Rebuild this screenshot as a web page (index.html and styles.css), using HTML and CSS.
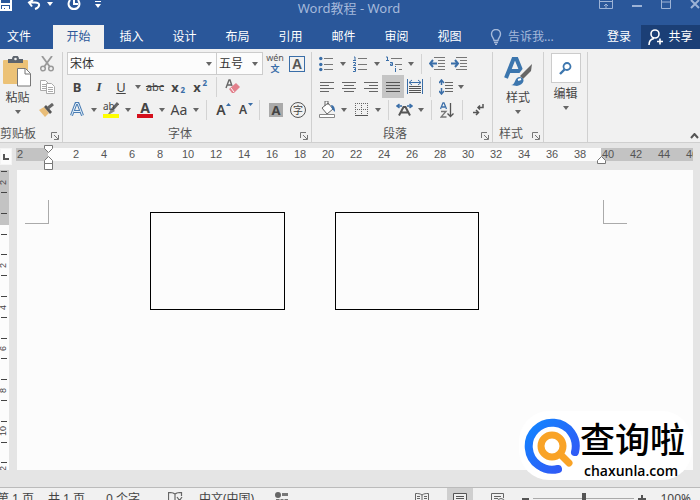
FILE: index.html
```html
<!DOCTYPE html>
<html lang="zh-CN">
<head>
<meta charset="utf-8">
<title>Word教程 - Word</title>
<link rel="stylesheet" href="styles.css">
</head>
<body>
<svg class="defs" aria-hidden="true">
  <symbol id="caret" viewBox="0 0 6 4"><path d="M0 0h6L3 4z" fill="currentColor"/></symbol>
  <symbol id="launch" viewBox="0 0 8 8"><path d="M.5 6V.5H6M3 3l4 4M7.500 3v4.500H3" fill="none" stroke="#777"/></symbol>
</svg>

<header class="top">
  <div class="titlebar">
    <div class="quick">
      <button aria-label="保存"><svg width="13" height="12" viewBox="0 0 13 12"><path d="M0 0v10h11V0M0 4h11M3 10V7h5v3M6 8v2" fill="none" stroke="#fff" stroke-width="2"/></svg></button>
      <button class="undo" aria-label="撤消"><svg width="14" height="10" viewBox="0 0 14 10"><path d="M2 2.500h6c6 0 5 5 0 6.500M6 0L2 2.500l3 4" fill="none" stroke="#fff" stroke-width="2"/></svg></button>
      <button class="undo-more" aria-label="撤消列表"><svg width="6" height="4"><use href="#caret"/></svg></button>
      <button class="redo" aria-label="重复"><svg width="14" height="12" viewBox="0 0 14 12"><path d="M3 0C0 4 2 9 7 9s7-5 4-9M7 0v4h4" fill="none" stroke="#fff" stroke-width="2"/></svg></button>
      <button class="custom" aria-label="自定义快速访问工具栏"><svg width="6" height="8" viewBox="0 0 6 8"><path d="M0 .5h6" stroke="#fff"/><path d="M0 3h6L3 7z" fill="#fff"/></svg></button>
    </div>
    <h1>Word教程 - Word</h1>
    <div class="window">
      <button aria-label="功能区显示选项"><svg width="14" height="10" viewBox="0 0 14 10"><path d="M.5 0v8.500h13V0M0 1.500h14M7 8V4M5 6l2-2 2 2" fill="none" stroke="currentColor"/></svg></button>
      <button aria-label="最小化"><svg width="10" height="10" viewBox="0 0 10 10"><path d="M0 6h10" stroke="currentColor" stroke-width="2"/></svg></button>
      <button aria-label="还原"><svg width="10" height="10" viewBox="0 0 10 10"><path d="M.5 0v8.500h9V0M0 2h10" fill="none" stroke="currentColor"/></svg></button>
      <button aria-label="关闭"><svg width="10" height="10" viewBox="0 0 10 10"><path d="M1 0l8 8M9 0L1 8" stroke="currentColor" stroke-width="2"/></svg></button>
    </div>
  </div>
  <nav class="tabs">
    <button class="file">文件</button>
    <button class="active">开始</button>
    <button>插入</button>
    <button>设计</button>
    <button>布局</button>
    <button>引用</button>
    <button>邮件</button>
    <button>审阅</button>
    <button>视图</button>
    <button class="tell"><svg width="12" height="16" viewBox="0 0 12 16"><path d="M4 11.500C4 9 1.500 8 1.500 5a4.500 4.500 0 019 0c0 3-2.500 4-2.500 6.500zM4 13.500h4M5 15.500h2" fill="none" stroke="currentColor" stroke-width="1.400"/></svg>告诉我...</button>
    <button class="login">登录</button>
    <button class="share"><svg width="16" height="17" viewBox="0 0 16 17"><circle cx="7" cy="5" r="4" fill="none" stroke="#fff" stroke-width="1.600"/><path d="M1 16c0-4 2-6 5-6.500M9 12.500h6M12 9.500v6" fill="none" stroke="#fff" stroke-width="1.600"/></svg>共享</button>
  </nav>
</header>

<section class="ribbon">
  <div class="group clipboard">
    <div class="body">
      <button class="big paste"><svg width="29" height="31" viewBox="0 0 29 31"><rect x="0" y="4" width="25" height="24" rx="1" fill="#ecc277"/><path d="M5 7V3h4a3.500 3.500 0 017 0h4v4z" fill="#5d646d"/><circle cx="12.500" cy="3" r="1.300" fill="#f1f1f1"/><path d="M14.500 12.500h8l5 5v12.500h-13z" fill="#fff" stroke="#777"/><path d="M22 13v5h5" fill="none" stroke="#777"/></svg><span>粘贴</span><svg class="caret" width="6" height="4"><use href="#caret"/></svg></button>
      <div class="stack">
        <button class="tool" aria-label="剪切"><svg width="14" height="16" viewBox="0 0 14 16"><path d="M2 0l8 11M12 0L4 11" stroke="#999" stroke-width="1.800"/><circle cx="3" cy="12.500" r="2.300" fill="none" stroke="#999" stroke-width="1.500"/><circle cx="11" cy="12.500" r="2.300" fill="none" stroke="#999" stroke-width="1.500"/></svg></button>
        <button class="tool" aria-label="复制"><svg width="15" height="14" viewBox="0 0 15 14"><path d="M.5.500h5l3 3v7h-8zM2 4.500h4M2 6.500h4M2 8.500h4" fill="#fff" stroke="#aaa"/><path d="M6.500 3.500h5l3 3v7h-8zM8 7.500h5M8 9.500h5M8 11.500h5" fill="#fff" stroke="#aaa"/></svg></button>
        <button class="tool" aria-label="格式刷"><svg width="16" height="14" viewBox="0 0 16 14"><path d="M0 7l5-3 5 6-4 4z" fill="#e9bd78"/><path d="M5 4l2-2 6 7-2 2z" fill="#555"/><path d="M9 5l5-4" stroke="#666" stroke-width="3"/></svg></button>
      </div>
    </div>
    <footer><span>剪贴板</span><button aria-label="剪贴板设置"><svg width="8" height="8"><use href="#launch"/></svg></button></footer>
  </div>

  <div class="group font">
    <div class="row">
      <label class="combo name"><select aria-label="字体"><option>宋体</option></select><svg class="caret" width="6" height="4"><use href="#caret"/></svg></label>
      <label class="combo size"><select aria-label="字号"><option>五号</option></select><svg class="caret" width="6" height="4"><use href="#caret"/></svg></label>
      <button class="tool pinyin" aria-label="拼音指南"><span>wén</span><b>文</b></button>
      <button class="tool boxed" aria-label="字符边框"><span>A</span></button>
    </div>
    <div class="row">
      <button class="tool"><b>B</b></button>
      <button class="tool"><i>I</i></button>
      <button class="tool"><u>U</u></button>
      <button class="drop" aria-label="下划线样式"><svg class="caret" width="6" height="4"><use href="#caret"/></svg></button>
      <button class="tool"><s>abc</s></button>
      <button class="tool script" aria-label="下标">x<sub>2</sub></button>
      <button class="tool script" aria-label="上标">x<sup>2</sup></button>
      <span class="sep wide"></span>
      <button class="tool" aria-label="清除格式"><svg width="15" height="15" viewBox="0 0 15 15"><path d="M1 9l3-8h1l2 6M2 6h4" fill="none" stroke="#666" stroke-width="1.400"/><path d="M4 10l7-6 4 4-6 6H7z" fill="#e2808c"/><path d="M6 9l3 4" stroke="#fff"/></svg></button>
    </div>
    <div class="row">
      <button class="tool" aria-label="文本效果"><svg width="14" height="15" viewBox="0 0 14 15"><path d="M1.500 13.500L6 1.500h2l4.500 12M3.500 9.500h7" fill="none" stroke="#4b7db3" stroke-width="3"/><path d="M1.500 13.500L6 1.500h2l4.500 12M3.500 9.500h7" fill="none" stroke="#e6f2fb" stroke-width="1"/></svg></button>
      <button class="drop" aria-label="文本效果列表"><svg class="caret" width="6" height="4"><use href="#caret"/></svg></button>
      <button class="tool mark" aria-label="突出显示"><span>ab</span><svg width="16" height="16" viewBox="0 0 16 16"><path d="M15 1L8 9" stroke="#666" stroke-width="3"/><path d="M9 6l3 3-5 3H5z" fill="#888"/><path d="M0 12h16v4H0z" fill="#ff0"/></svg></button>
      <button class="drop" aria-label="突出显示颜色"><svg class="caret" width="6" height="4"><use href="#caret"/></svg></button>
      <button class="tool color" aria-label="字体颜色"><span>A</span></button>
      <button class="drop" aria-label="字体颜色列表"><svg class="caret" width="6" height="4"><use href="#caret"/></svg></button>
      <button class="tool case">Aa</button>
      <button class="drop" aria-label="更改大小写"><svg class="caret" width="6" height="4"><use href="#caret"/></svg></button>
      <span class="sep"></span>
      <button class="tool grow" aria-label="增大字号">A<svg width="5" height="3" viewBox="0 0 5 3"><path d="M0 3h5L2.500 0z" fill="#3a6ea8"/></svg></button>
      <button class="tool grow small" aria-label="缩小字号">A<svg width="5" height="3" viewBox="0 0 5 3"><path d="M0 0h5L2.500 3z" fill="#3a6ea8"/></svg></button>
      <span class="sep"></span>
      <button class="tool shade" aria-label="字符底纹"><span>A</span></button>
      <button class="tool ring" aria-label="带圈字符"><span>字</span></button>
    </div>
    <footer><span>字体</span><button aria-label="字体设置"><svg width="8" height="8"><use href="#launch"/></svg></button></footer>
  </div>

  <div class="group para">
    <div class="row">
      <button class="tool" aria-label="项目符号"><svg width="14" height="16" viewBox="0 0 14 16"><path d="M5 2.500h9M5 8.500h9M5 13.500h9" stroke="#777"/><circle cx="1.800" cy="2.500" r="1.700" fill="#3a6ea8"/><circle cx="1.800" cy="8.500" r="1.700" fill="#3a6ea8"/><circle cx="1.800" cy="13.500" r="1.700" fill="#3a6ea8"/></svg></button>
      <button class="drop" aria-label="项目符号库"><svg class="caret" width="6" height="4"><use href="#caret"/></svg></button>
      <button class="tool" aria-label="编号"><svg width="14" height="16" viewBox="0 0 14 16"><path d="M5 2.500h9M5 8.500h9M5 13.500h9" stroke="#777"/><path d="M1 1h1v3M0 4.500h3M0 6.500h2.500v1.500L.5 9.500H3M0 11.500h2.500v4H0M1 13.500h1" fill="none" stroke="#3a6ea8"/></svg></button>
      <button class="drop" aria-label="编号库"><svg class="caret" width="6" height="4"><use href="#caret"/></svg></button>
      <button class="tool" aria-label="多级列表"><svg width="16" height="16" viewBox="0 0 16 16"><path d="M5 2.500h11M9 8.500h7M13 13.500h3" stroke="#777"/><path d="M0 1h1.500v3M0 4.500h3M4 6.500h2.500v3H4.500v-1.500h2M9.500 12v4M9.500 10v1" fill="none" stroke="#3a6ea8"/></svg></button>
      <button class="drop" aria-label="多级列表库"><svg class="caret" width="6" height="4"><use href="#caret"/></svg></button>
      <span class="sep"></span>
      <button class="tool" aria-label="减少缩进量"><svg width="16" height="13" viewBox="0 0 16 13"><path d="M5 .5h11M9 3.500h7M9 6.500h7M9 9.500h7M5 12.500h11" stroke="#777"/><path d="M8 6.500H1M4 3L1 6.500 4 10" fill="none" stroke="#3a6ea8" stroke-width="2"/></svg></button>
      <button class="tool" aria-label="增加缩进量"><svg width="16" height="13" viewBox="0 0 16 13"><path d="M5 .5h11M9 3.500h7M9 6.500h7M9 9.500h7M5 12.500h11" stroke="#777"/><path d="M0 6.500h7M4 3l3 3.500L4 10" fill="none" stroke="#3a6ea8" stroke-width="2"/></svg></button>
    </div>
    <div class="row inset">
      <button class="tool" aria-label="左对齐"><svg width="14" height="11" viewBox="0 0 14 11"><path d="M0 1.500h14M0 4.500h9M0 7.500h14M0 10.500h9" stroke="#666"/></svg></button>
      <button class="tool" aria-label="居中"><svg width="14" height="11" viewBox="0 0 14 11"><path d="M0 1.500h14M2 4.500h10M0 7.500h14M2 10.500h10" stroke="#666"/></svg></button>
      <button class="tool" aria-label="右对齐"><svg width="14" height="11" viewBox="0 0 14 11"><path d="M0 1.500h14M5 4.500h9M0 7.500h14M5 10.500h9" stroke="#666"/></svg></button>
      <button class="tool pressed" aria-label="两端对齐"><svg width="14" height="11" viewBox="0 0 14 11"><path d="M0 1.500h14M0 4.500h14M0 7.500h14M0 10.500h14" stroke="#555"/></svg></button>
      <button class="tool" aria-label="分散对齐"><svg width="16" height="15" viewBox="0 0 16 15"><path d="M.5 0v15M15.500 0v15M2 3.500h12M5 1L2 3.500 5 6M11 1l3 2.500L11 6" fill="none" stroke="#3a6ea8"/><path d="M2 7.500h12M2 9.500h12M2 11.500h12M2 13.500h12" stroke="#555"/></svg></button>
      <span class="sep"></span>
      <button class="tool" aria-label="行距"><svg width="14" height="16" viewBox="0 0 14 16"><path d="M6 3.500h8M6 6.500h8M6 9.500h8M6 12.500h8" stroke="#666"/><path d="M2.500 1v5M0 4l2.500-3L5 4M2.500 9v6M0 12l2.500 3L5 12" fill="none" stroke="#3a6ea8" stroke-width="1.500"/></svg></button>
      <button class="drop tight" aria-label="行距选项"><svg class="caret" width="6" height="4"><use href="#caret"/></svg></button>
    </div>
    <div class="row inset">
      <button class="tool" aria-label="底纹"><svg width="17" height="17" viewBox="0 0 17 17"><path d="M3 7l6-5 5 6-6 5zM6 5V0h3v4" fill="#fff" stroke="#666"/><path d="M12 4c3 0 4 3 4 7l-3-3z" fill="#3a6ea8"/><path d="M.5 13.500h15v3H.5z" fill="#fff" stroke="#888"/></svg></button>
      <button class="drop" aria-label="底纹颜色"><svg class="caret" width="6" height="4"><use href="#caret"/></svg></button>
      <button class="tool" aria-label="边框"><svg width="13" height="13" viewBox="0 0 13 13"><path d="M0 .5h13M0 6.500h13M.5 0v13M6.500 0v13M12.500 0v13" stroke="#666" stroke-dasharray="1 1"/><path d="M0 12.500h13" stroke="#555"/></svg></button>
      <button class="drop" aria-label="边框列表"><svg class="caret" width="6" height="4"><use href="#caret"/></svg></button>
      <span class="sep"></span>
      <button class="tool" aria-label="中文版式"><svg width="17" height="13" viewBox="0 0 17 13"><path d="M3 12.500L7.500 4h2l4.500 8.500M5 9.500h7" fill="none" stroke="#555" stroke-width="2"/><path d="M6 3H1M3.500 1L1 3l2.500 2M11 3h5M13.500 1L16 3l-2.500 2" fill="none" stroke="#3a6ea8" stroke-width="1.500"/></svg></button>
      <button class="drop" aria-label="中文版式选项"><svg class="caret" width="6" height="4"><use href="#caret"/></svg></button>
      <span class="sep"></span>
      <button class="tool" aria-label="排序"><svg width="14" height="16" viewBox="0 0 14 16"><path d="M.5 7L3 .8h1L6.500 7M2 5h3" fill="none" stroke="#3a6ea8" stroke-width="1.300"/><path d="M1 9.500h5l-5 5.500h5.500" fill="none" stroke="#777" stroke-width="1.300"/><path d="M10.500 1v13M7.500 11.500l3 3 3-3" fill="none" stroke="#555" stroke-width="1.300"/></svg></button>
      <span class="sep"></span>
      <button class="tool" aria-label="显示编辑标记"><svg width="11" height="12" viewBox="0 0 11 12"><path d="M10 0v3.500H5M7 1.500l-2 2 2 2M0 8.500h5M3 6l2.500 2.500L3 11" fill="none" stroke="#555" stroke-width="1.500"/></svg></button>
    </div>
    <footer><span>段落</span><button aria-label="段落设置"><svg width="8" height="8"><use href="#launch"/></svg></button></footer>
  </div>

  <div class="group styles">
    <div class="body">
      <button class="big"><svg width="29" height="31" viewBox="0 0 29 31"><path d="M2 22L9.500 3h3L19 19M5 15h11" fill="none" stroke="#3c76ae" stroke-width="4"/><path d="M27 8L16 22" stroke="#f1f1f1" stroke-width="7"/><path d="M28 8l-1 7-8 8-3-3z" fill="#666"/><path d="M7 29c5 0 3-8 9-8 6 1 4 8-3 9z" fill="#3c76ae"/><path d="M14 24l3-1" stroke="#fff" stroke-width="2"/></svg><span>样式</span><svg class="caret" width="6" height="4"><use href="#caret"/></svg></button>
    </div>
    <footer><span>样式</span><button aria-label="样式设置"><svg width="8" height="8"><use href="#launch"/></svg></button></footer>
  </div>

  <div class="group editing">
    <div class="body">
      <button class="big"><span class="find"><svg width="13" height="13" viewBox="0 0 13 13"><circle cx="8" cy="4.500" r="3.500" fill="none" stroke="#3c76ae" stroke-width="1.800"/><path d="M5.500 7.500L1 12" stroke="#3c76ae" stroke-width="2.400"/></svg></span><span>编辑</span><svg class="caret" width="6" height="4"><use href="#caret"/></svg></button>
    </div>
  </div>
  <button class="collapse" aria-label="折叠功能区"><svg width="9" height="6" viewBox="0 0 9 6"><path d="M1 5l3.500-4L8 5" fill="none" stroke="#555" stroke-width="2"/></svg></button>
</section>

<div class="hruler">
  <button class="tabstop" aria-label="制表符"><svg width="6" height="6" viewBox="0 0 6 6"><path d="M1 0v5h5" fill="none" stroke="#555" stroke-width="2"/></svg></button>
  <div class="scale">
    <span>2</span><span></span><span>2</span><span>4</span><span>6</span><span>8</span><span>10</span><span>12</span><span>14</span><span>16</span><span>18</span><span>20</span><span>22</span><span>24</span><span>26</span><span>28</span><span>30</span><span>32</span><span>34</span><span>36</span><span>38</span><span>40</span><span>42</span><span>44</span><span>46</span>
  </div>
  <svg class="indent first" width="9" height="25" viewBox="0 0 9 25"><path d="M.5.500h8v3l-4 4-4-4zM.5 18.500v-3l4-4 4 4v3zM.5 18.500h8v6h-8z" fill="#fff" stroke="#777"/></svg>
  <svg class="indent last" width="9" height="8" viewBox="0 0 9 8"><path d="M.5 7.500v-3l4-4 4 4v3z" fill="#fff" stroke="#777"/></svg>
</div>

<main>
  <svg class="vruler" width="9" height="300" viewBox="0 0 9 300">
    <path d="M0 0h9v300H0z" fill="#fcfcfc"/><path d="M0 0h9v55H0z" fill="#c3c3c3"/>
    <path d="M1 1.500h6M1 22.500h6M1 43.500h6M1 64.500h6M1 84.500h6M1 105.500h6M1 126.500h6M1 147.500h6M1 168.500h6M1 188.500h6M1 209.500h6M1 230.500h6M1 251.500h6M1 272.500h6M1 292.500h6" stroke="#444"/>
    <g>
      <text transform="translate(6 15) rotate(-90)">2</text>
      <text transform="translate(6 98) rotate(-90)">2</text>
      <text transform="translate(6 140) rotate(-90)">4</text>
      <text transform="translate(6 181) rotate(-90)">6</text>
      <text transform="translate(6 223) rotate(-90)">8</text>
      <text transform="translate(6 266) rotate(-90)">10</text>
      <text transform="translate(6 306) rotate(-90)">12</text>
    </g>
  </svg>
  <article class="page">
    <i class="crop left"></i><i class="crop right"></i>
    <div class="shape"></div>
    <div class="shape second"></div>
  </article>
</main>

<footer class="status">
  <span class="pages">第 1 页</span>
  <span class="total">共 1 页</span>
  <span class="words">0 个字</span>
  <svg class="proof" width="15" height="14" viewBox="0 0 15 14"><path d="M7 2v11M7 2C5 .5 3 .5.500.500V11C3 11 5 11.500 7 13M7 2C9 .5 11 .5 13.500.500V4M9 5l5 7M14 5l-5 7" fill="none" stroke="#666" stroke-width="1.200"/></svg>
  <span class="lang">中文(中国)</span>
  <svg class="macro" width="13" height="14" viewBox="0 0 13 14"><circle cx="3" cy="3" r="3" fill="#666"/><path d="M7 1h6v3H7zM1 7h12v6H1z" fill="#777"/><path d="M1 9.500h12M5 7v6M9 7v6" stroke="#f1f1f1"/></svg>
  <span class="space"></span>
  <button class="view" aria-label="阅读视图"><svg width="14" height="12" viewBox="0 0 14 12"><path d="M7 1.500v10M.5.500C3 .5 5 .5 7 2c2-1.500 4-1.500 6.500-1.500v10C11 10.500 9 10.500 7 12 5 10.500 3 10.500.500 10.500zM2 3.500h3M2 5.500h3M2 7.500h3M9 3.500h3M9 5.500h3M9 7.500h3" fill="none" stroke="#666"/></svg></button>
  <button class="view on" aria-label="页面视图"><svg width="14" height="12" viewBox="0 0 14 12"><path d="M.5.500h13v12H.5zM3 3.500h8M3 5.500h8M3 7.500h8M3 9.500h8" fill="#eee" stroke="#555"/></svg></button>
  <button class="view" aria-label="Web 版式视图"><svg width="14" height="12" viewBox="0 0 14 12"><path d="M.5 12V.5h12V5M3 3.500h7M3 5.500h4M3 7.500h3" fill="none" stroke="#666"/><circle cx="10" cy="9" r="3.500" fill="none" stroke="#666"/></svg></button>
  <button class="zoom minus" aria-label="缩小"><svg width="7" height="8" viewBox="0 0 7 8"><path d="M0 4h7" stroke="#555" stroke-width="2"/></svg></button>
  <input type="range" aria-label="显示比例" min="0" max="100" value="50">
  <button class="zoom" aria-label="放大"><svg width="8" height="8" viewBox="0 0 8 8"><path d="M0 4h8M4 0v8" stroke="#555" stroke-width="2"/></svg></button>
  <span class="percent">100%</span>
</footer>

<aside class="brand">
  <svg width="56" height="56" viewBox="0 0 56 56"><defs><linearGradient id="ring" x1="0" y1="0" x2="1" y2="1"><stop offset="0" stop-color="#1285ff"/><stop offset="1" stop-color="#3553f4"/></linearGradient></defs><path d="M51 34a23.500 23.500 0 10-17 17" fill="none" stroke="url(#ring)" stroke-width="8" stroke-linecap="round"/><circle cx="28" cy="28" r="11" fill="none" stroke="#f9a326" stroke-width="7"/><path d="M37 37l8 8" stroke="#f9a326" stroke-width="7" stroke-linecap="round"/></svg>
  <div><strong>查询啦</strong><span>chaxunla.com</span></div>
</aside>
</body>
</html>
```
FILE: styles.css
```css
* { box-sizing: border-box; }
body {
  margin: 0;
  height: 100vh;
  display: flex;
  flex-direction: column;
  overflow: hidden;
  position: relative;
  background: #e5e5e5;
  color: #444;
  font: 12px/16px "Noto Sans", "Noto Sans CJK SC", sans-serif;
}
button {
  margin: 0;
  padding: 0;
  border: 0;
  background: none;
  color: inherit;
  font: inherit;
  display: flex;
  align-items: center;
  justify-content: center;
  flex: none;
}
svg { display: block; flex: none; }
.defs { position: absolute; width: 0; height: 0; }

/* title and tabs */
.top { background: #2a579a; color: #fff; flex: none; }
.titlebar {
  display: grid;
  grid-template-columns: 1fr auto 1fr;
  height: 25px;
  align-items: start;
}
.quick { display: flex; align-items: flex-start; }
.undo { margin-left: 14px; }
.undo-more { margin: 2px 0 0 6px; }
.redo { margin-left: 14px; }
.custom { margin: 1px 0 0 14px; }
h1 { margin: 0; padding: 0 2px 0 0; font-size: 13px; line-height: 16px; font-weight: 400; color: #a5b9da; }
.window { display: flex; justify-content: flex-end; gap: 19px; color: #9db3d6; }
.tabs { display: flex; height: 24px; }
.tabs button { width: 51px; margin: 0 1px; }
.tabs .file { width: 38px; margin: 0 7px; justify-content: flex-start; }
.tabs .active { background: #f1f1f1; color: #2a579a; }
.tabs .tell { width: auto; margin: 0 auto 0 14px; gap: 6px; color: #a5b9da; }
.tabs .login { width: 24px; margin: 0 10px; }
.tabs .share { width: 59px; margin: 0; gap: 4px; background: #1b3f76; }

/* ribbon */
.ribbon {
  display: flex;
  flex: none;
  background: #f1f1f1;
  border-bottom: 1px solid #cfcfcf;
  padding-top: 3px;
}
.group {
  display: flex;
  flex-direction: column;
  border-right: 1px solid #d0d0d0;
  height: 90px;
}
.clipboard { width: 63px; }
.font { width: 249px; padding-left: 3px; }
.para { width: 181px; padding-left: 3px; }
.styles { width: 51px; }
.editing { width: 44px; }
.body { display: flex; justify-content: center; }
.row { display: flex; height: 23px; align-items: center; flex: none; }
.inset { padding-left: 1px; }
.tool { width: 22px; height: 23px; font-size: 13px; }
.drop { width: 12px; height: 23px; }
.tight { width: 8px; }
.caret { color: #666; }
.sep { width: 1px; height: 20px; margin: 0 4px; background: #d3d3d3; flex: none; }
.wide { margin: 0 4px 0 6px; }
.group footer { display: flex; align-items: center; height: 16px; margin: auto 0 0 -3px; color: #555; }
.clipboard footer, .styles footer { margin-left: 0; }
.group footer span { flex: 1; text-align: center; white-space: nowrap; }
.clipboard footer span { text-align: left; }
.group footer button { width: 14px; padding-top: 4px; }
.big { flex-direction: column; justify-content: flex-start; color: #444; }
.big span { margin-top: 3px; }
.big .caret { margin-top: 4px; }
.clipboard .body { justify-content: space-between; padding: 0 4px 0 3px; }
.paste svg:first-child { margin-top: 4px; }
.styles .body { padding-top: 4px; }
.find {
  display: flex;
  align-items: center;
  justify-content: center;
  width: 30px;
  height: 30px;
  background: #fff;
  border: 1px solid #ccc;
}
.big .find { margin-top: 1px; }
.collapse { margin: auto 1px 3px auto; }

.combo { position: relative; height: 23px; margin-left: 1px; background: #fcfcfc; border: 1px solid #ccc; }
.combo select {
  appearance: none;
  width: 100%;
  height: 21px;
  padding: 0 2px;
  border: 0;
  background: none;
  color: #333;
  font: inherit;
}
.combo .caret { position: absolute; right: 4px; top: 9px; }
.name { width: 150px; }
.size { width: 47px; margin-left: -1px; }
.pinyin { flex-direction: column; margin-left: 1px; font-size: 9px; line-height: 9px; color: #555; }
.pinyin b { font-size: 9px; line-height: 13px; color: #3a6ea8; }
.boxed span { width: 16px; height: 16px; border: 1px solid #3a6ea8; font: bold 14px/14px "Liberation Sans", sans-serif; }
.boxed { color: #555; }
.tool s { font-size: 11px; }
.tool i { font: italic bold 13px "Liberation Serif", serif; }
.script { font-weight: 700; position: relative; padding-right: 4px; }
.script sub, .script sup { position: absolute; right: 3px; font-size: 8px; line-height: 8px; color: #3a6ea8; }
.script sub { bottom: 4px; }
.script sup { top: 4px; }
.mark { position: relative; }
.mark span { position: absolute; left: 3px; top: 2px; font-size: 10px; line-height: 12px; }
.color span { width: 16px; height: 16px; border-bottom: 4px solid #d40f1c; font: bold 14px/12px "Noto Sans", sans-serif; }
.case { font-size: 14px; }
.grow { position: relative; font-size: 14px; font-weight: 600; padding-right: 2px; }
.grow svg { position: absolute; right: 2px; top: 5px; }
.small { font-size: 12px; }
.shade span { width: 14px; height: 14px; background: #aaa; font: bold 13px/14px "Noto Sans", sans-serif; }
.shade { margin-left: 1px; }
.ring span { width: 16px; height: 16px; border: 1px solid #555; border-radius: 50%; font-size: 10px; line-height: 14px; }
.pressed { background: #c5c5c5; }

/* rulers and page */
.hruler { position: relative; display: flex; flex: none; height: 27px; padding: 5px 7px 0 0; }
.tabstop { width: 12px; height: 17px; margin-right: 4px; background: #fcfcfc; border: 1px solid #f5f5f5; }
.scale {
  display: flex;
  flex: 1;
  min-width: 0;
  height: 13px;
  overflow: hidden;
  background: linear-gradient(90deg, #c3c3c3 32px, #fcfcfc 32px 585px, #c3c3c3 585px);
  font: 11px/13px "Liberation Sans", sans-serif;
  color: #555;
}
.scale span { flex: none; width: 28px; text-align: center; }
.scale span:first-child { margin-left: -10px; }
.indent { position: absolute; }
.first { left: 44px; top: 2px; }
.last { left: 597px; top: 13px; }
main { display: flex; flex: 1; min-height: 0; padding: 0 7px 17px 0; }
.vruler { font: 9px "Liberation Sans", sans-serif; margin-right: 8px; fill: #444; }
.page {
  position: relative;
  flex: 1;
  display: flex;
  align-items: flex-start;
  gap: 50px;
  padding: 42px 0 0 133px;
  background: #fcfcfc;
}
.shape { width: 135px; height: 98px; border: 1px solid #000; }
.second { width: 144px; }
.crop { position: absolute; top: 30px; width: 24px; height: 24px; border: 0 solid #aaa; border-bottom-width: 1px; }
.left { left: 8px; border-right-width: 1px; }
.right { left: 586px; border-left-width: 1px; }

/* the status bar runs past the bottom edge of the window */
.status {
  display: flex;
  align-items: center;
  flex: none;
  height: 22px;
  margin-bottom: -9px;
  border-top: 1px solid #bbb;
  background: #f1f1f1;
  white-space: nowrap;
}
.pages { margin-left: -3px; width: 51px; }
.total { width: 58px; }
.words { width: 62px; }
.lang { margin-left: 16px; width: 76px; }
.space { flex: 1; }
.view { width: 26px; height: 21px; margin-right: 12px; }
.on { background: #cfcfcf; }
.status .minus { margin-left: -1px; }
.status input { appearance: none; width: 101px; height: 8px; margin: 0 4px; background: linear-gradient(#aaa, #aaa) center / 100% 1px no-repeat; }
.status input::-webkit-slider-thumb { appearance: none; width: 4px; height: 11px; background: #555; }
.percent { margin: 0 9px 0 14px; }

.brand {
  position: absolute;
  right: 8px;
  bottom: 20px;
  display: flex;
  align-items: center;
  padding: 0 0 0 5px;
  width: 173px;
  height: 69px;
  border-radius: 30px;
  background: #fff;
  color: #000;
}
.brand div { display: flex; flex-direction: column; white-space: nowrap; }
.brand strong { font: 500 35px/51px "Noto Sans CJK SC", sans-serif; }
.brand span { padding-left: 4px; font: 600 14px/16px "Open Sans", sans-serif; }
```
